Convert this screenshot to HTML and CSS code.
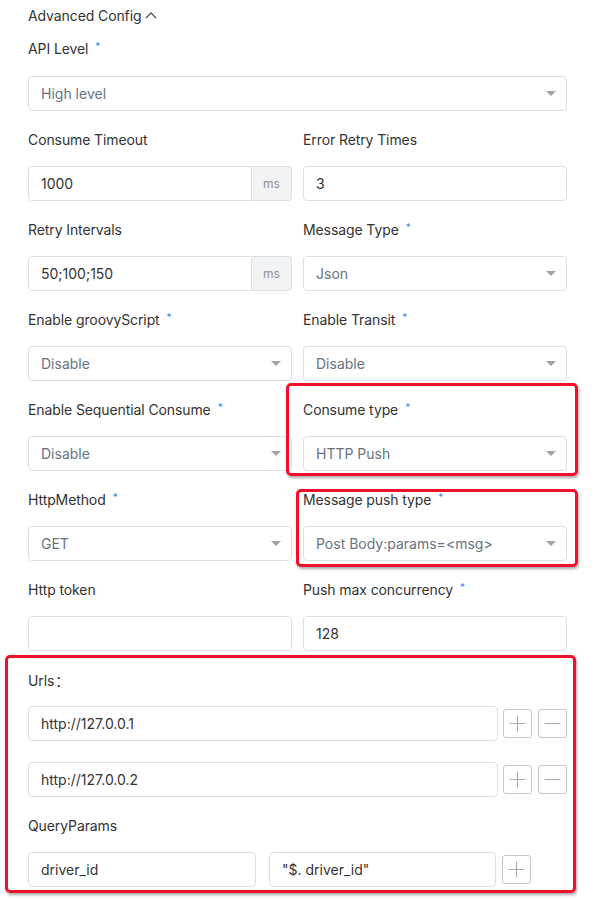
FILE: index.html
```html
<!DOCTYPE html>
<html>
<head>
<meta charset="utf-8">
<link rel="stylesheet" href="styles.css">
</head>
<body>
<div class="page">
  <div class="section-title">Advanced Config
    <svg class="chev" width="12" height="8" viewBox="0 0 12 8"><path d="M1 7 L6 1.8 L11 7" fill="none" stroke="#444" stroke-width="1.2"/></svg>
  </div>

  <div class="item first">
    <div class="label">API Level<span class="req">*</span></div>
    <div class="select"><span>High level</span><i class="caret"></i></div>
  </div>

  <div class="grid">
    <div class="item">
      <div class="label">Consume Timeout</div>
      <div class="input-group"><div class="input join">1000</div><div class="addon">ms</div></div>
    </div>
    <div class="item">
      <div class="label">Error Retry Times</div>
      <div class="input">3</div>
    </div>

    <div class="item">
      <div class="label">Retry Intervals</div>
      <div class="input-group"><div class="input join">50;100;150</div><div class="addon">ms</div></div>
    </div>
    <div class="item">
      <div class="label">Message Type<span class="req">*</span></div>
      <div class="select"><span>Json</span><i class="caret"></i></div>
    </div>

    <div class="item">
      <div class="label">Enable groovyScript<span class="req">*</span></div>
      <div class="select"><span>Disable</span><i class="caret"></i></div>
    </div>
    <div class="item">
      <div class="label">Enable Transit<span class="req">*</span></div>
      <div class="select"><span>Disable</span><i class="caret"></i></div>
    </div>

    <div class="item">
      <div class="label">Enable Sequential Consume<span class="req">*</span></div>
      <div class="select"><span>Disable</span><i class="caret"></i></div>
    </div>
    <div class="item">
      <div class="label">Consume type<span class="req">*</span></div>
      <div class="select"><span>HTTP Push</span><i class="caret"></i></div>
    </div>

    <div class="item">
      <div class="label">HttpMethod<span class="req">*</span></div>
      <div class="select"><span>GET</span><i class="caret"></i></div>
    </div>
    <div class="item">
      <div class="label">Message push type<span class="req">*</span></div>
      <div class="select"><span>Post Body:params=&lt;msg&gt;</span><i class="caret"></i></div>
    </div>

    <div class="item">
      <div class="label">Http token</div>
      <div class="input"></div>
    </div>
    <div class="item">
      <div class="label">Push max concurrency<span class="req">*</span></div>
      <div class="input">128</div>
    </div>
  </div>

  <div class="item">
    <div class="label">Urls<span class="colon">：</span></div>
    <div class="row url-row">
      <div class="input grow">http://127.0.0.1</div>
      <div class="btns">
        <span class="sq"><svg width="29" height="29" viewBox="0 0 29 29"><path d="M14.5 6.5 V22.5 M6.5 14.5 H22.5" stroke="#a9adb3" stroke-width="1.2"/></svg></span>
        <span class="sq"><svg width="29" height="29" viewBox="0 0 29 29"><path d="M6.5 14.5 H22.5" stroke="#a9adb3" stroke-width="1.2"/></svg></span>
      </div>
    </div>
    <div class="row url-row second">
      <div class="input grow">http://127.0.0.2</div>
      <div class="btns">
        <span class="sq"><svg width="29" height="29" viewBox="0 0 29 29"><path d="M14.5 6.5 V22.5 M6.5 14.5 H22.5" stroke="#a9adb3" stroke-width="1.2"/></svg></span>
        <span class="sq"><svg width="29" height="29" viewBox="0 0 29 29"><path d="M6.5 14.5 H22.5" stroke="#a9adb3" stroke-width="1.2"/></svg></span>
      </div>
    </div>
  </div>

  <div class="item">
    <div class="label">QueryParams</div>
    <div class="row query-row">
      <div class="input q1">driver_id</div>
      <div class="input q2">"$. driver_id"</div>
      <span class="sq"><svg width="29" height="29" viewBox="0 0 29 29"><path d="M14.5 6.5 V22.5 M6.5 14.5 H22.5" stroke="#a9adb3" stroke-width="1.2"/></svg></span>
    </div>
  </div>

  <div class="mark mark1"></div>
  <div class="mark mark2"></div>
  <div class="mark mark3"></div>
</div>
</body>
</html>
```

FILE: styles.css
```css
* { box-sizing: border-box; }
html, body { margin: 0; padding: 0; background: #fff; }
body {
  font-family: "Inter", "Noto Sans", "Liberation Sans", sans-serif;
  font-size: 14px;
  color: #333;
}
.page {
  position: relative;
  width: 602px;
  height: 901px;
  padding: 6px 35px 0 28px;
}
.section-title {
  height: 20px;
  line-height: 20px;
  display: flex;
  align-items: center;
  gap: 4px;
  margin-bottom: 13px;
  letter-spacing: -0.1px;
}
.chev { margin-top: -3px; }
.grid {
  display: grid;
  grid-template-columns: 264px 264px;
  column-gap: 11px;
}
.item { margin-bottom: 19px; }
.label {
  height: 20px;
  line-height: 20px;
  margin-bottom: 16px;
  color: #333;
  letter-spacing: -0.1px;
  white-space: nowrap;
}
.item.first .label { margin-bottom: 17px; }
.req {
  color: #2d8cf0;
  font-size: 10px;
  line-height: 10px;
  position: relative;
  top: -4px;
  margin-left: 7px;
}
.colon {
  font-family: "Noto Sans CJK SC", sans-serif;
  margin-left: 1px;
  letter-spacing: 0;
}
.input, .select {
  height: 35px;
  border: 1px solid #dcdfe6;
  border-radius: 4px;
  padding: 0 12px;
  display: flex;
  align-items: center;
  background: #fff;
  color: #333;
}
.select {
  justify-content: space-between;
  color: #68737f;
}
.caret {
  width: 0;
  height: 0;
  border-left: 5px solid transparent;
  border-right: 5px solid transparent;
  border-top: 5px solid #a0a4aa;
  margin-right: -2px;
}
.input-group { display: flex; }
.input.join {
  flex: 1;
  border-top-right-radius: 0;
  border-bottom-right-radius: 0;
}
.addon {
  width: 40px;
  height: 35px;
  border: 1px solid #dcdfe6;
  border-left: none;
  border-radius: 0 4px 4px 0;
  background: #f2f3f5;
  color: #8c9096;
  font-size: 12px;
  display: flex;
  align-items: center;
  justify-content: center;
}
.row { display: flex; align-items: center; }
.url-row.second { margin-top: 21px; }
.grow { flex: 1; }
.btns { display: flex; gap: 6px; margin-left: 5px; }
.sq {
  width: 29px;
  height: 29px;
  border: 1px solid #c4c7cc;
  border-radius: 3px;
  display: flex;
  align-items: center;
  justify-content: center;
  overflow: hidden;
}
.sq svg { flex: none; }
.q1 { width: 228px; }
.q2 { width: 227px; margin-left: 13px; }
.query-row .sq { margin-left: 6px; }
.mark {
  position: absolute;
  border: 3px solid #f0102a;
  border-radius: 5px;
  box-shadow: 1px 2px 3px rgba(0,0,0,0.35);
}
.mark1 { left: 286px; top: 383px; width: 292px; height: 93px; }
.mark2 { left: 296px; top: 489px; width: 282px; height: 78px; }
.mark3 { left: 5px; top: 655px; width: 571px; height: 238px; }
```
